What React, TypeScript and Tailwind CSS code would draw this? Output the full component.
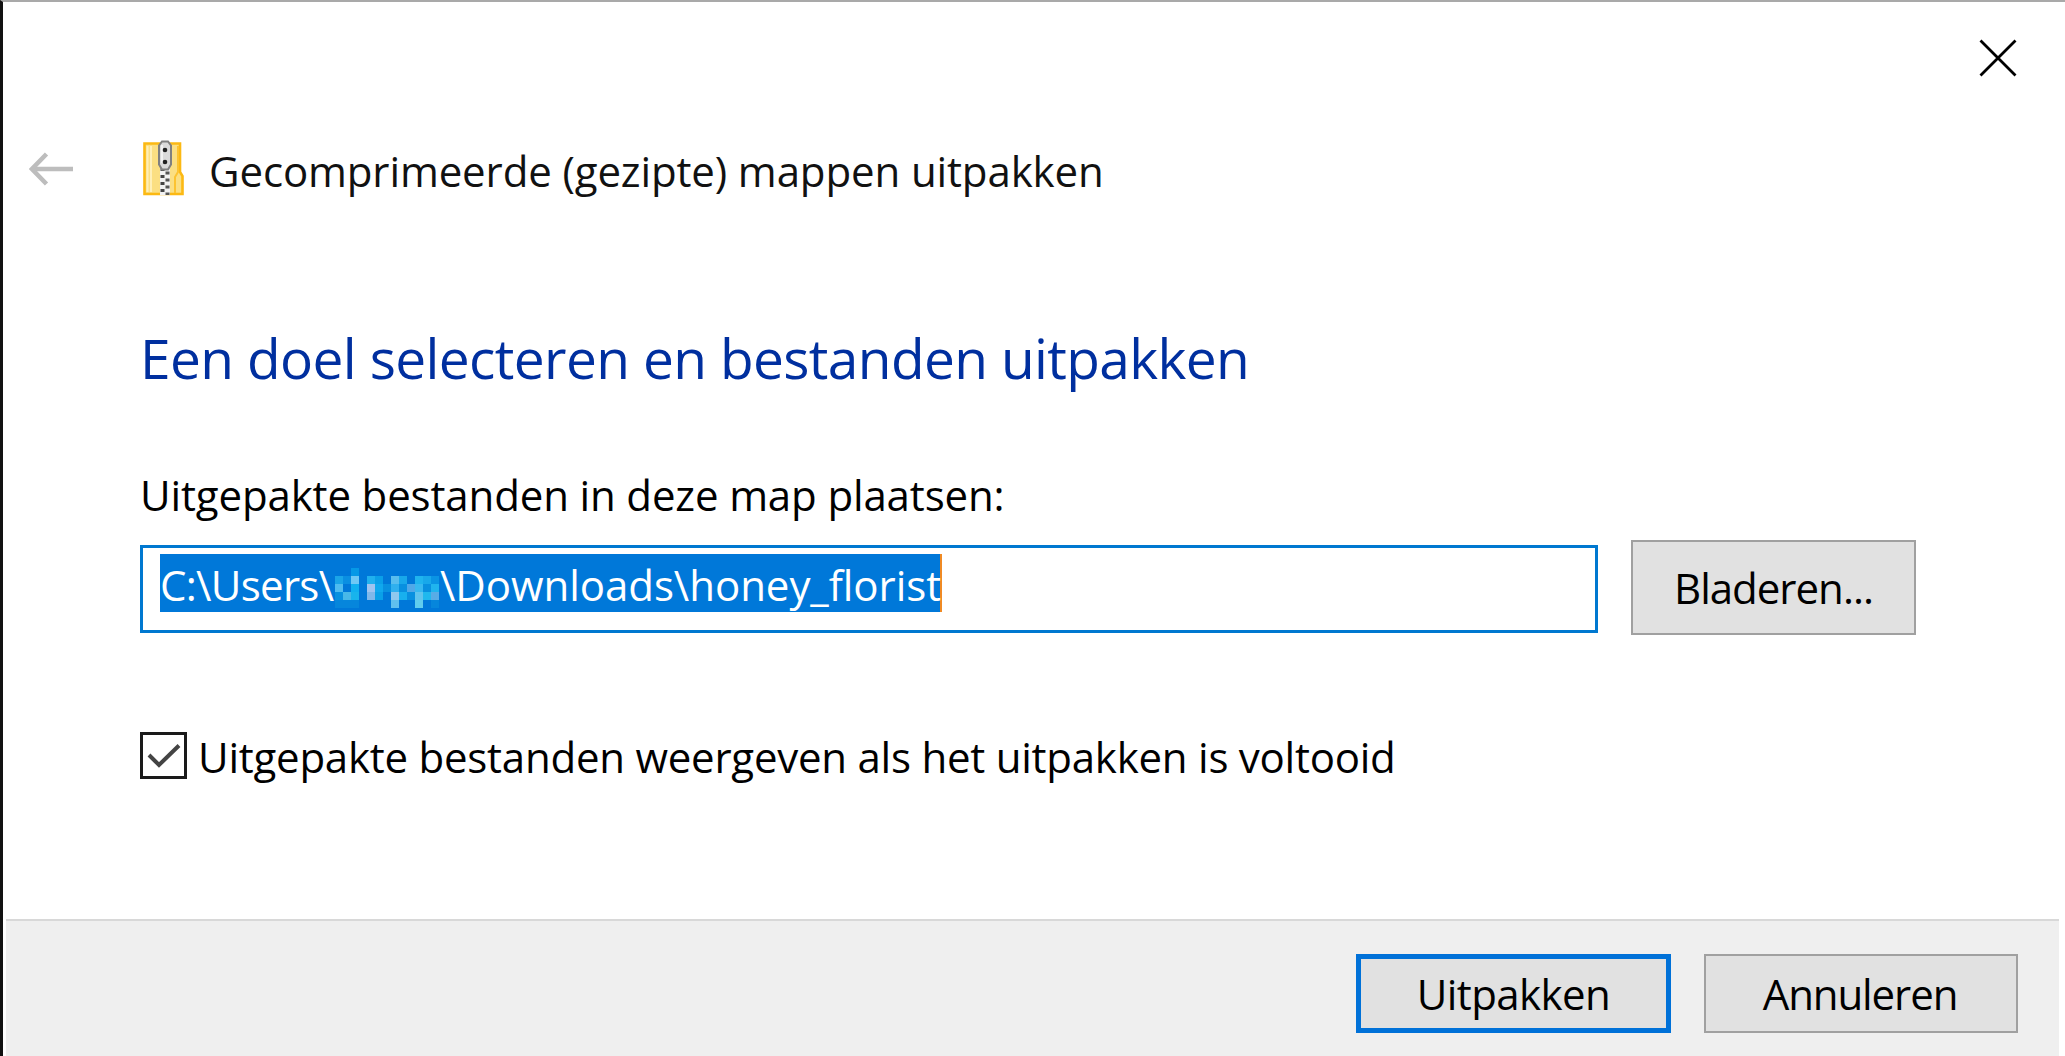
import React, { useState } from 'react';

// Colours of the blurred user name, row by row ('' leaves the selection visible)
const mosaic: string[][] = [
  ['', '', '#0698e6', '', '', '', '', '', '', '', '', '', ''],
  ['#1aa5e8', '#0a8fe2', '#6fc8f5', '', '#20b0ee', '#0a9fe8', '', '#58bdee', '#18a8ea', '', '#1fb4ee', '#18a8ea', '#0a94e4'],
  ['#4fbcf0', '', '#10b0f0', '', '#a0c4f0', '#10a8ee', '#0890e0', '#30b0ee', '#0890e0', '#50a8e8', '#38b8f0', '#0890e0', '#20b4ee'],
  ['#0890e0', '#48b8e8', '#18b4ec', '', '#80b8ea', '#0aa0e8', '', '#90c8ee', '#18b0ee', '#0890e0', '#60c4ee', '#20b8ee', '#58ace6'],
  ['#0686dc', '#0686dc', '#0686dc', '', '', '', '', '#60c0ee', '', '', '#60ccee', '', '#0686dc'],
];

const BackArrow: React.FC = () => (
  <svg width="44" height="34" viewBox="0 0 44 34" fill="none" stroke="#bdbdbd" strokeWidth="4.5">
    <path d="M44 17H3" />
    <path d="M17.500 2L3 17l14.500 15" />
  </svg>
);

const CloseIcon: React.FC = () => (
  <svg width="38" height="38" viewBox="0 0 38 38" stroke="#000" strokeWidth="2.8">
    <path d="M1.500 1.500l35 35M36.500 1.500l-35 35" />
  </svg>
);

const ZipFolderIcon: React.FC = () => (
  <svg width="42" height="56" viewBox="0 0 42 56">
    <path d="M1.500 3.500h35.500v28.500l2.500 4v18h-38z" fill="#fbdf82" stroke="#fcb913" strokeWidth="2.600" />
    <path d="M4.500 6v46M8 6v46" stroke="#fff0b8" strokeWidth="2" />
    <path d="M35 6v26l-3 5v16" fill="none" stroke="#fcc331" strokeWidth="2" />
    <path d="M17 28h10v27H17z" fill="#f2f2f2" />
    <path d="M19.500 28v27" stroke="#444" strokeWidth="4" strokeDasharray="3 4" />
    <path d="M24.500 31.500v23.500" stroke="#555" strokeWidth="4" strokeDasharray="3 4" />
    <path d="M19 1.500h6l3 4v19l-3 5h-6l-3-5v-19z" fill="#dadada" stroke="#808080" strokeWidth="2" />
    <path d="M19 5v18" stroke="#f1f1f1" strokeWidth="2" />
    <circle cx="22" cy="10" r="2.300" fill="#222" />
    <circle cx="22" cy="22" r="2.300" fill="#222" />
  </svg>
);

const HiddenName: React.FC = () => (
  <svg className="mt-[14px] shrink-0" width="104" height="40" viewBox="0 0 13 5" shapeRendering="crispEdges">
    {mosaic.map((row, y) =>
      row.map((color, x) => color && <rect key={`${x}-${y}`} x={x} y={y} width="1" height="1" fill={color} />)
    )}
  </svg>
);

const App: React.FC = () => {
  const [showFiles, setShowFiles] = useState(true);

  return (
    <div className="flex h-[1056px] w-[2065px] flex-col overflow-hidden border-l-[3px] border-t-2 border-l-[#111] border-t-[#a9a9a9] bg-white font-['Open_Sans','Noto_Sans',sans-serif] text-[42px] leading-[60px] whitespace-nowrap text-black">
      <div className="flex h-[112px] justify-end pt-[37px] pr-[48px]">
        <button className="h-[38px]" aria-label="Sluiten">
          <CloseIcon />
        </button>
      </div>

      <header className="flex h-[112px] pl-[26px]">
        <button className="mt-[38px] h-[34px]" aria-label="Terug">
          <BackArrow />
        </button>
        <div className="mt-[26px] ml-[70px]">
          <ZipFolderIcon />
        </div>
        <h1 className="mt-[27px] ml-[24px] tracking-[-0.12px] text-[#111]">Gecomprimeerde (gezipte) mappen uitpakken</h1>
      </header>

      <main className="flex flex-1 flex-col pl-[137px]">
        <h2 className="mt-[97px] h-[70px] text-[55px] leading-[70px] tracking-[-0.62px] text-[#002f9f]">
          Een doel selecteren en bestanden uitpakken
        </h2>
        <label className="mt-[72px] h-[60px] tracking-[-0.14px]">Uitgepakte bestanden in deze map plaatsen:</label>

        <div className="mt-[15px] flex items-start">
          <div className="mt-[5px] flex h-[88px] w-[1458px] border-[3px] border-[#0078d0] pt-[6px] pl-[17px]">
            <div className="flex h-[58px] w-[782px] border-r-2 border-[#f08a24] bg-[#0078d9] leading-[61px] text-white">
              <span className="w-[175px] shrink-0 tracking-[-0.7px]">C:\Users\</span>
              <HiddenName />
              <span className="ml-px tracking-[-0.05px]">\Downloads\honey_florist</span>
            </div>
          </div>
          <button className="ml-[33px] h-[95px] w-[285px] border-2 border-[#a0a0a0] bg-[#e1e1e1] tracking-[-1px]">
            Bladeren...
          </button>
        </div>

        <div className="mt-[90px] flex items-start">
          <button
            role="checkbox"
            aria-checked={showFiles}
            aria-label="Uitgepakte bestanden weergeven"
            onClick={() => setShowFiles(!showFiles)}
            className="mt-[7px] flex size-[47px] items-center justify-center border-[3px] border-[#1a1a1a]"
          >
            {showFiles && (
              <svg width="34" height="26" viewBox="0 0 34 26" fill="none" stroke="#444" strokeWidth="4">
                <path d="M2 12l10 10L32 2.500" />
              </svg>
            )}
          </button>
          <span className="mt-[2px] ml-[11px] tracking-[-0.24px]">
            Uitgepakte bestanden weergeven als het uitpakken is voltooid
          </span>
        </div>
      </main>

      <footer className="mr-[6px] ml-[3px] flex h-[137px] justify-end gap-[33px] border-t-2 border-[#d8d8d8] bg-[#efefef] pt-[33px] pr-[41px]">
        <button className="h-[79px] w-[315px] border-[5px] border-[#0071d8] bg-[#e1e1e1] tracking-[-0.6px]">
          Uitpakken
        </button>
        <button className="h-[79px] w-[314px] border-2 border-[#a0a0a0] bg-[#e1e1e1] pr-[2px] tracking-[-1.1px]">
          Annuleren
        </button>
      </footer>
    </div>
  );
};

export default App;
